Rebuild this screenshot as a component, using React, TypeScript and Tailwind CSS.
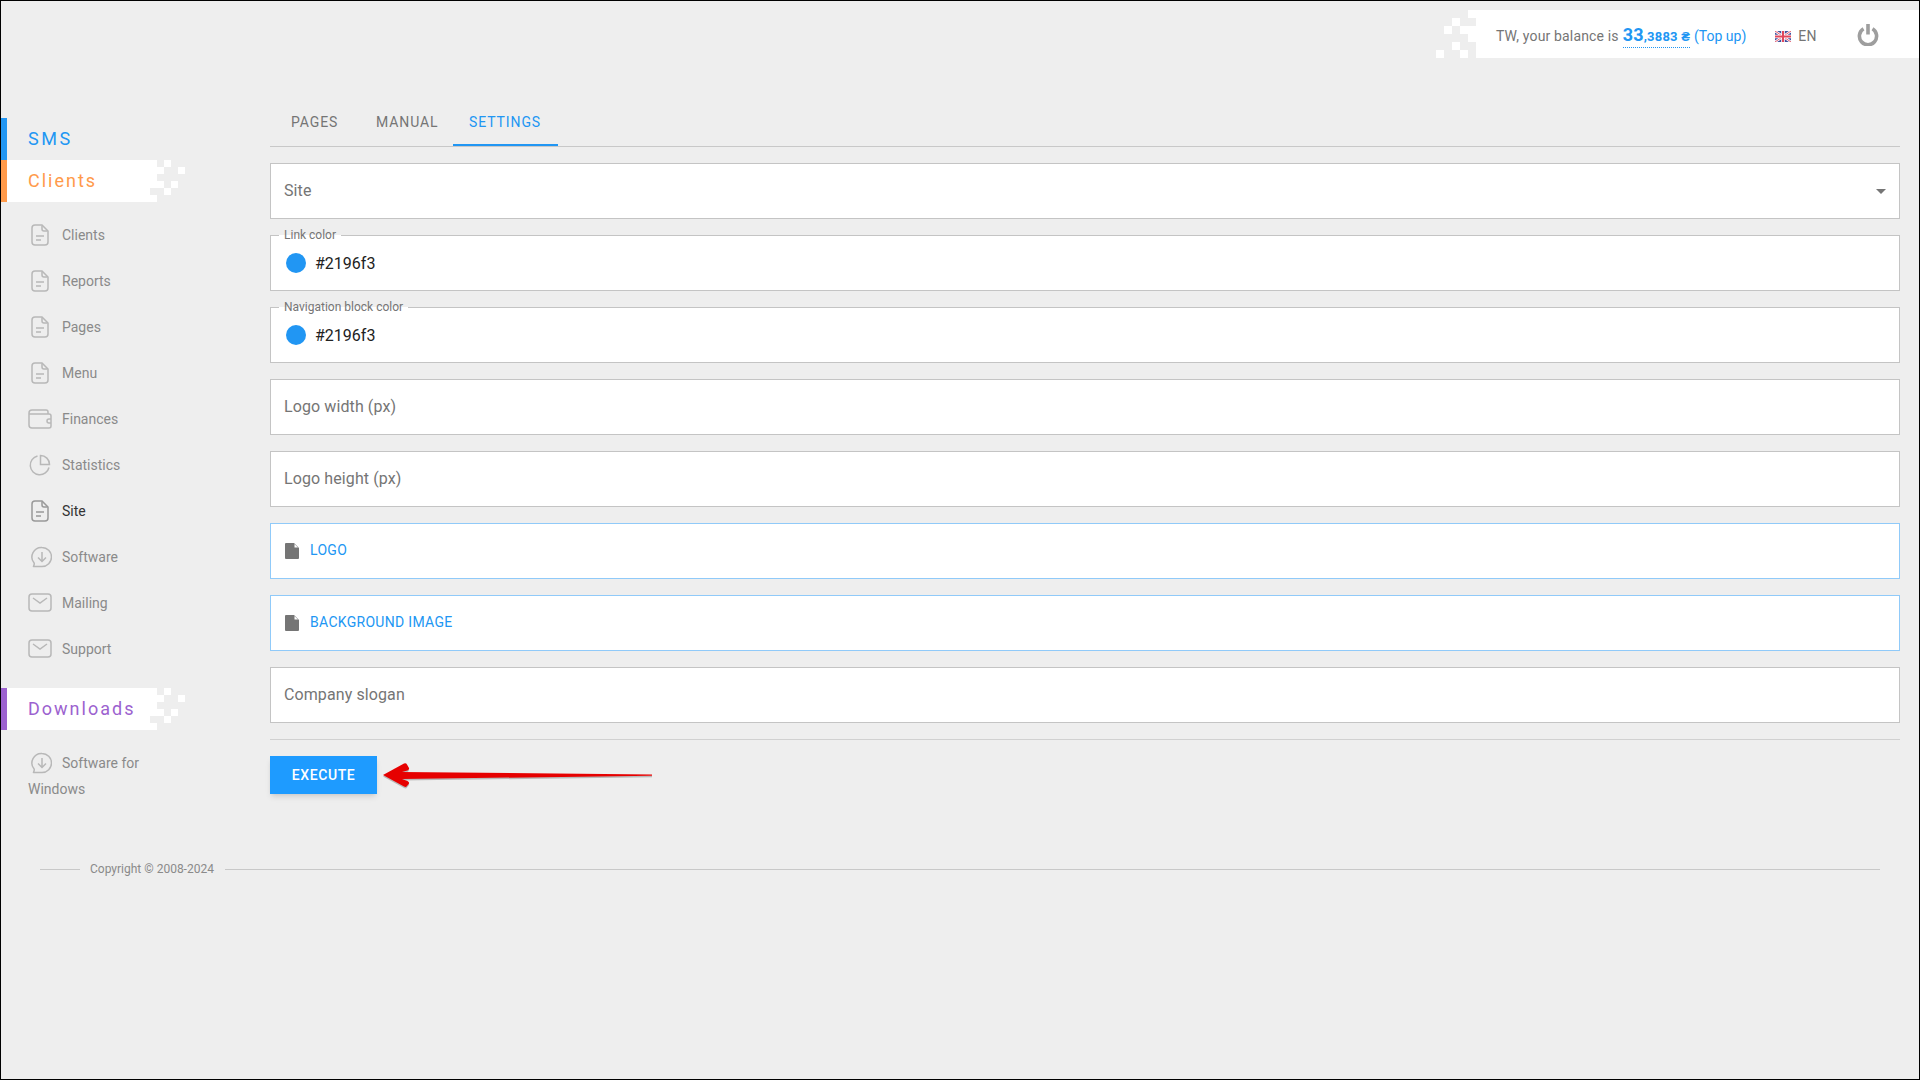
import { ReactNode } from "react";

const iconClass = "inline-block align-middle mr-[10px] -mt-[3px] w-6 h-6 fill-none stroke-[1.5]";

const DocIcon = ({ dark }: { dark?: boolean }) => (
  <svg viewBox="0 0 24 24" className={`${iconClass} ${dark ? "stroke-[#999999]" : "stroke-[#b8b8b8]"}`}>
    <path d="M7 2h7l6 6v11a3 3 0 0 1-3 3H7a3 3 0 0 1-3-3V5a3 3 0 0 1 3-3z" />
    <path d="M14 2.5V6a2 2 0 0 0 2 2h3.5" />
    <path d="M8 13h8M8 17h5" />
  </svg>
);

const WalletIcon = () => (
  <svg viewBox="0 0 24 24" className={`${iconClass} stroke-[#b8b8b8]`}>
    <path d="M1 7h20a2 2 0 0 1 2 2v10a2 2 0 0 1-2 2H4a3 3 0 0 1-3-3V6a3 3 0 0 1 3-3h14a2 2 0 0 1 2 2v2" />
    <path d="M23 12h-2a2 2 0 0 0 0 4h2" />
  </svg>
);

const PieIcon = () => (
  <svg viewBox="0 0 24 24" className={`${iconClass} stroke-[#b8b8b8]`}>
    <path d="M9.5 3a9.5 9.5 0 1 0 11.5 11.5" />
    <path d="M12.5 2.5a9 9 0 0 1 9 9h-9z" />
  </svg>
);

const BubbleIcon = () => (
  <svg viewBox="0 0 24 24" className={`${iconClass} stroke-[#b8b8b8]`}>
    <path d="M14 2.5a9.5 9.5 0 1 1 0 19H5.5c-.3 0 1.3-2 .6-3.5A9.5 9.5 0 0 1 14 2.5z" />
    <path d="M14 7v9M10 12.5l4 4 4-4" />
  </svg>
);

const MailIcon = () => (
  <svg viewBox="0 0 24 24" className={`${iconClass} stroke-[#b8b8b8]`}>
    <rect x="1" y="3" width="22" height="17" rx="3" />
    <path d="M5 7l7 5 7-5" />
  </svg>
);

const FileIcon = () => (
  <svg viewBox="0 0 14 16" className="w-[14px] h-4 shrink-0">
    <path d="M1 0h8l5 5v10a1 1 0 0 1-1 1H1a1 1 0 0 1-1-1V1a1 1 0 0 1 1-1z" fill="#757575" />
    <path d="M9.5 1v3.5H13z" fill="#ffffff" />
  </svg>
);

const Flag = () => (
  <svg viewBox="0 0 16 11" className="w-4 h-[11px]">
    <rect width="16" height="11" fill="#3f4f9e" />
    <path d="M0 0l16 11M16 0L0 11" stroke="#ffffff" strokeWidth="2.4" />
    <path d="M0 0l16 11M16 0L0 11" stroke="#e0475c" strokeWidth="0.9" />
    <path d="M8 0v11M0 5.5h16" stroke="#ffffff" strokeWidth="3.6" />
    <path d="M8 0v11M0 5.5h16" stroke="#e0475c" strokeWidth="2" />
  </svg>
);

const PowerIcon = () => (
  <svg viewBox="0 0 22 22" className="w-[22px] h-[22px] fill-none stroke-[#9e9e9e] stroke-[3.6]">
    <path d="M6.5 4.8a8.6 8.6 0 1 0 9 0" />
    <path d="M11 0v10.5" />
  </svg>
);

// the little white squares where a heading fades out
const SectionPixels = () => (
  <svg viewBox="0 0 35 42" className="w-[35px] h-[42px] fill-white">
    <rect x="0" y="0" width="7" height="7" />
    <rect x="14" y="0" width="7" height="7" />
    <rect x="0" y="7" width="14" height="7" />
    <rect x="28" y="7" width="7" height="7" />
    <rect x="0" y="14" width="7" height="7" />
    <rect x="0" y="21" width="14" height="7" />
    <rect x="21" y="21" width="7" height="7" />
    <rect x="14" y="28" width="7" height="7" />
    <rect x="0" y="35" width="7" height="7" />
  </svg>
);

const HeaderPixels = () => (
  <svg viewBox="0 0 40 48" className="w-10 h-12 fill-white">
    <rect x="32" y="0" width="8" height="8" />
    <rect x="16" y="8" width="8" height="8" />
    <rect x="8" y="16" width="8" height="8" />
    <rect x="24" y="16" width="16" height="8" />
    <rect x="32" y="24" width="8" height="8" />
    <rect x="16" y="32" width="8" height="8" />
    <rect x="0" y="40" width="8" height="8" />
    <rect x="24" y="40" width="8" height="8" />
  </svg>
);

const NavItem = ({ icon, label, active }: { icon: ReactNode; label: string; active?: boolean }) => (
  <div className={`py-[10px] pl-[27px] w-[170px] text-[14px] leading-[26px] ${active ? "text-[#333333]" : "text-[#8a8a8a]"}`}>
    {icon}
    {label}
  </div>
);

const Field = ({ children, blue }: { children: ReactNode; blue?: boolean }) => (
  <div className={`relative flex items-center h-[56px] px-[13px] bg-white border ${blue ? "border-[#90caf9]" : "border-[#c4c4c4]"}`}>
    {children}
  </div>
);

const ColorField = ({ label }: { label: string }) => (
  <Field>
    <span className="absolute -top-[8px] left-[8px] h-[14px] px-[5px] text-[12px] leading-[14px] tracking-normal text-[#757575] bg-[linear-gradient(to_bottom,#eeeeee_50%,#ffffff_50%)]">
      {label}
    </span>
    <span className="w-5 h-5 ml-[2px] rounded-full bg-[#2196f3]" />
    <span className="ml-[9px] mt-[2px] text-[16px] tracking-normal text-[#222222]">#2196f3</span>
  </Field>
);

const App = () => {
  return (
    <div className="min-h-screen box-border border border-black bg-[#eeeeee] font-['Roboto',sans-serif]">
      {/* Top bar */}
      <div className="flex justify-end pt-[9px]">
        <HeaderPixels />
        <div className="flex items-center w-[443px] h-12 pl-[20px] pt-[5px] bg-white text-[14px] tracking-[0.15px] text-[#757575]">
          <span>TW, your balance is</span>
          <span className="ml-[4px] border-b border-dotted border-[#2196f3] text-[#2196f3] font-bold leading-[20px] tracking-[0.2px]">
            <span className="text-[18px]">33</span>
            <span className="text-[13px]">,3883 ₴</span>
          </span>
          <span className="ml-[4px] tracking-normal text-[#2196f3]">(Top up)</span>
          <span className="ml-[29px]"><Flag /></span>
          <span className="ml-[7px]">EN</span>
          <span className="ml-[40px] mb-[3px]"><PowerIcon /></span>
        </div>
      </div>

      <div className="flex mt-[42px]">
        {/* Sidebar */}
        <aside className="w-[269px] shrink-0 pt-[18px]">
          <div className="flex items-center h-[42px] pl-[21px] pb-[2px] border-l-[6px] border-[#2196f3] text-[18px] tracking-[2.6px] text-[#2196f3]">
            SMS
          </div>
          <div className="flex w-[184px] mb-[10px]">
            <div className="flex items-center h-[42px] w-[149px] pl-[21px] pb-[2px] bg-white border-l-[6px] border-[#ff9a4a] text-[18px] tracking-[2px] text-[#ff9a4a]">
              Clients
            </div>
            <SectionPixels />
          </div>
          <NavItem icon={<DocIcon />} label="Clients" />
          <NavItem icon={<DocIcon />} label="Reports" />
          <NavItem icon={<DocIcon />} label="Pages" />
          <NavItem icon={<DocIcon />} label="Menu" />
          <NavItem icon={<WalletIcon />} label="Finances" />
          <NavItem icon={<PieIcon />} label="Statistics" />
          <NavItem icon={<DocIcon dark />} label="Site" active />
          <NavItem icon={<BubbleIcon />} label="Software" />
          <NavItem icon={<MailIcon />} label="Mailing" />
          <NavItem icon={<MailIcon />} label="Support" />
          <div className="flex w-[184px] mt-4 mb-[10px]">
            <div className="flex items-center h-[42px] w-[149px] pl-[21px] pb-[2px] bg-white border-l-[6px] border-[#9c62cf] text-[18px] tracking-[2px] text-[#9c62cf]">
              Downloads
            </div>
            <SectionPixels />
          </div>
          <NavItem icon={<BubbleIcon />} label="Software for Windows" />
        </aside>

        {/* Main content */}
        <main className="flex-1 pr-[19px]">
          <div className="flex h-[47px] pl-[5px] border-b border-[#c8c8c8] text-[14px] uppercase tracking-[0.9px] text-[#757575]">
            <div className="flex items-center w-[85px] h-[46px] pl-4 pb-[2px]">Pages</div>
            <div className="flex items-center w-[93px] h-[46px] pl-4 pb-[2px]">Manual</div>
            <div className="flex items-center w-[105px] h-[46px] pl-4 border-b-2 border-[#2196f3] text-[#2196f3]">Settings</div>
          </div>

          <div className="flex flex-col gap-4 mt-4 text-[16px] tracking-[0.1px] text-[#757575]">
            <Field>
              <span className="flex-1">Site</span>
              <span className="w-0 h-0 border-x-[5px] border-t-[5px] border-x-transparent border-t-[#757575]" />
            </Field>
            <ColorField label="Link color" />
            <ColorField label="Navigation block color" />
            <Field>Logo width (px)</Field>
            <Field>Logo height (px)</Field>
            <Field blue>
              <span className="ml-px"><FileIcon /></span>
              <span className="ml-[11px] mb-px text-[14px] uppercase tracking-[0.3px] text-[#2196f3]">Logo</span>
            </Field>
            <Field blue>
              <span className="ml-px"><FileIcon /></span>
              <span className="ml-[11px] mb-px text-[14px] uppercase tracking-[0.3px] text-[#2196f3]">Background image</span>
            </Field>
            <Field>Company slogan</Field>
          </div>

          <div className="mt-4 pt-4 border-t border-[#d0d0d0] flex items-center">
            <button className="w-[107px] h-[38px] bg-[#1e9bff] text-white text-[14px] font-medium uppercase tracking-[0.6px] shadow-md">
              Execute
            </button>
            <svg viewBox="0 0 270 30" className="ml-[5px] w-[270px] h-[30px] overflow-visible">
              <path d="M1 15 L22 3.5 Q24 2.5 25 4.5 L27 8 Q27.5 9.5 25.5 10.5 L20 12 L270 14.4 L270 15.8 L20 19 L25.5 21 Q27.5 22 27 23.5 L25 26 Q24 27.5 22 26.5 Z" fill="#b9b9b9" transform="translate(0 1.5)" />
              <path d="M1 15 L22 3.5 Q24 2.5 25 4.5 L27 8 Q27.5 9.5 25.5 10.5 L20 12 L270 14.4 L270 15.8 L20 19 L25.5 21 Q27.5 22 27 23.5 L25 26 Q24 27.5 22 26.5 Z" fill="#e60000" />
            </svg>
          </div>
        </main>
      </div>

      {/* Footer */}
      <div className="flex items-center gap-[10px] mt-[47px] pl-[39px] pr-[39px] h-5 text-[12px] text-[#8a8a8a]">
        <div className="w-10 h-px bg-[#c8c8c8]" />
        <span className="mr-px">Copyright © 2008-2024</span>
        <div className="flex-1 h-px bg-[#c8c8c8]" />
      </div>
    </div>
  );
};

export default App;
